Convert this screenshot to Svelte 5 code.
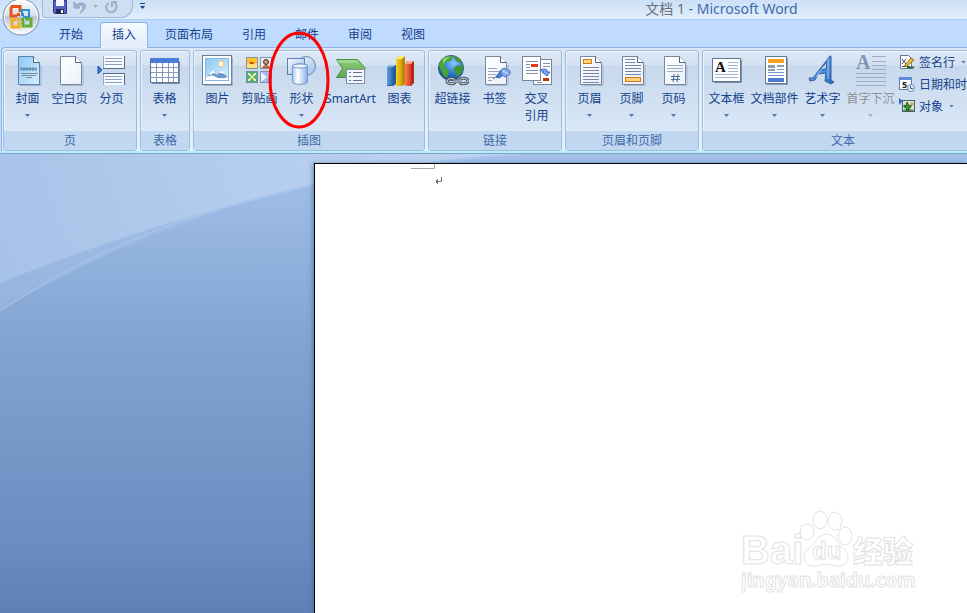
<script lang="ts">
  type Item = { icon: string; label: string; size?: 'wide' | 'long'; menu?: boolean; circled?: boolean; disabled?: boolean }
  type Group = { name: string; items: Item[]; small?: { icon: string; label: string; menu: boolean }[] }

  const tabs = ['开始', '插入', '页面布局', '引用', '邮件', '审阅', '视图']
  let active = $state('插入')

  const groups: Group[] = [
    {
      name: '页',
      items: [
        { icon: 'cover', label: '封面', menu: true },
        { icon: 'blank', label: '空白页' },
        { icon: 'break', label: '分页' }
      ]
    },
    { name: '表格', items: [{ icon: 'table', label: '表格', menu: true }] },
    {
      name: '插图',
      items: [
        { icon: 'picture', label: '图片' },
        { icon: 'clipart', label: '剪贴画' },
        { icon: 'shapes', label: '形状', menu: true, circled: true },
        { icon: 'smartart', label: 'SmartArt', size: 'wide' },
        { icon: 'chart', label: '图表' }
      ]
    },
    {
      name: '链接',
      items: [
        { icon: 'link', label: '超链接' },
        { icon: 'bookmark', label: '书签' },
        { icon: 'crossref', label: '交叉\n引用' }
      ]
    },
    {
      name: '页眉和页脚',
      items: [
        { icon: 'header', label: '页眉', menu: true },
        { icon: 'footer', label: '页脚', menu: true },
        { icon: 'number', label: '页码', menu: true }
      ]
    },
    {
      name: '文本',
      items: [
        { icon: 'textbox', label: '文本框', menu: true },
        { icon: 'parts', label: '文档部件', size: 'long', menu: true },
        { icon: 'wordart', label: '艺术字', menu: true },
        { icon: 'dropcap', label: '首字下沉', size: 'long', menu: true, disabled: true }
      ],
      small: [
        { icon: 'sign', label: '签名行', menu: true },
        { icon: 'date', label: '日期和时间', menu: false },
        { icon: 'object', label: '对象', menu: true }
      ]
    }
  ]
</script>

{#snippet sheet()}
  <path d="M8 30.500h21V10" fill="none" stroke="#8795ab" stroke-opacity=".5" />
  <path d="M6.500 1.500h15l6 6v22h-21z" fill="url(#paper)" stroke="#7787a0" />
  <path d="M21.500 1.500v6h6" fill="#fff" stroke="#53647f" />
{/snippet}

{#snippet icon(name: string)}
  <svg class="icon" viewBox="0 0 32 32" aria-hidden="true">
    {#if name === 'cover'}
      <path d="M8 30.500h21V10" fill="none" stroke="#8795ab" stroke-opacity=".6" />
      <path d="M6.500 1.500h15l6 6v22h-21z" fill="url(#sky)" stroke="#5b82b3" />
      <path d="M21.500 1.500v6h6" fill="#fff" stroke="#53647f" />
      <path d="M9 15.500v-3l3 3v-3l3 3v-3l3 3v-3l3 3v-3l3 3v-3" fill="none" stroke="#456589" />
      <path d="M9 18.500h17M10 20.500h14M14 22.500h6" stroke="#7f8b99" />
    {:else if name === 'blank'}
      {@render sheet()}
    {:else if name === 'break'}
      <path d="M7.500 1v12.500h21V1M7.500 30V18.500h21V30" fill="#f7faff" stroke="#9aa9c2" />
      <path d="M9 3.500h17M9 6.500h17M9 9.500h17M9 21.500h17M9 24.500h17M9 27.500h17" stroke="#8d9fc0" />
      <path d="M28.500 1v12.500H7M7 18.500h21.500V30" fill="none" stroke="#54698e" />
      <path d="M2 11l4 4-4 4z" fill="#3e77d3" stroke="#2355a8" />
    {:else if name === 'table'}
      <path d="M3 28.500h27.500V6" fill="none" stroke="#7d8ca6" />
      <rect x="1.500" y="3.500" width="28" height="24" fill="#fbfdff" stroke="#5f7597" />
      <rect x="2" y="3" width="28" height="5" fill="#4a7cdb" />
      <path d="M2 12.500h28M2 17.500h28M2 22.500h28M7.500 8v19M13.500 8v19M19.500 8v19M24.500 8v19" stroke="#8999b4" />
    {:else if name === 'picture'}
      <rect x="2" y="2" width="29" height="29" fill="#8395ad" opacity=".6" />
      <rect x=".5" y=".5" width="29" height="29" fill="#fff" stroke="#68809d" />
      <rect x="3.500" y="3.500" width="23" height="22" fill="url(#sky)" stroke="#8db6dc" />
      <circle cx="19" cy="9" r="3" fill="#fffbe5" stroke="#f2b984" />
      <path d="M4 23l7-8 4 5 5-5 6 8z" fill="#6e9ac9" />
      <path d="M7 19l4-4 3 4-3-1-2 2zM17 18l3-3 4 5-4-2z" fill="#fff" />
      <path d="M4 22q6-3 10 0t12 0v3H4z" fill="#fff" />
    {:else if name === 'clipart'}
      <rect x="2.500" y="2.500" width="11" height="11" fill="#ffc323" stroke="#8094a6" />
      <path d="M3 9c3-3 6 1 10-1v5H3z" fill="#ffe07a" /><path d="M5 7h3l3 1-2 1H6z" fill="#c64a0c" />
      <rect x="16.500" y="2.500" width="11" height="11" fill="#f2f4f3" stroke="#8094a6" />
      <circle cx="22" cy="7" r="2.500" fill="#c99a78" stroke="#333" /><path d="M18 13c1-4 7-4 8 0z" fill="#c75d38" />
      <rect x="2.500" y="16.500" width="11" height="11" fill="#4cad80" stroke="#7192a0" />
      <path d="M8 22l-4-3 1-1zl3-4 1 1zl4 3-1 1zl-3 4-1-1z" fill="#fff69b" stroke="#fff69b" />
      <rect x="16.500" y="16.500" width="11" height="11" fill="#a6b8fa" stroke="#8094a6" /><path d="M17 17l6 5-6 5z" fill="#eef1ff" />
    {:else if name === 'shapes'}
      <circle cx="20" cy="11" r="9.500" fill="url(#lens)" stroke="#6688b5" />
      <rect x="1.500" y="3.500" width="17" height="16" fill="url(#lens)" stroke="#5f80ad" />
      <path d="M6.500 11c0-3 15-3 15 0v16c0 3-15 3-15 0z" fill="url(#tube)" stroke="#7599ca" />
      <ellipse cx="14" cy="11" rx="7.500" ry="2" fill="#edf6ff" stroke="#7599ca" />
    {:else if name === 'smartart'}
      <path d="M1.500 4.500h21l8 9-8 9h-21l6-9z" fill="url(#leaf)" stroke="#4c8b42" />
      <path d="M2 5h20l2 3H4z" fill="#a7dda0" opacity=".7" />
      <rect x="11.500" y="14.500" width="18" height="14" fill="#f4f8fd" stroke="#8191a9" />
      <path d="M14 17.500h2M18 17.500h9M14 21.500h2M18 21.500h9M14 25.500h2M18 25.500h9" stroke="#5d718f" />
    {:else if name === 'chart'}
      <path d="M3 12l3-2h6v19l-3 2H3z" fill="#235da0" /><path d="M3 12h6v18H3z" fill="url(#blueBar)" /><path d="M3 12l3-2h6l-3 2z" fill="#81b9e9" />
      <path d="M12 4l4-3h5v28l-3 2h-6z" fill="#bb8a00" /><path d="M12 4h6v27h-6z" fill="url(#goldBar)" /><path d="M12 4l4-3h5l-3 3z" fill="#ffeb6b" />
      <path d="M21 9l3-3h6v22l-3 3h-6z" fill="#b62b0f" /><path d="M21 9h6v22h-6z" fill="url(#redBar)" /><path d="M21 9l3-3h6l-3 3z" fill="#ffa486" />
    {:else if name === 'link'}
      <circle cx="14" cy="13" r="12.500" fill="url(#globe)" stroke="#31598f" />
      <path d="M4 5c4-4 8-5 12-3l-2 4-5 1-2 5 5 3-2 8-4-3-4-9z" fill="#4ba536" />
      <path d="M17 1c5 1 7 4 8 7l-4-1-3-2zM19 11l7-1c1 6-2 9-6 12l-2-4-2-4z" fill="#429637" />
      <path d="M6 4c3-2 5-2 7-2l-4 3-3 4z" fill="#b5e492" opacity=".7" />
      <g fill="none">
        <path d="M18 25c-1-2-8-2-8 1s7 4 8 1M23 25c1-3 8-2 8 1s-7 4-8 1M17 26h8" stroke="#4c5560" stroke-width="3" />
        <path d="M18 25c-1-2-8-2-8 1s7 4 8 1M23 25c1-3 8-2 8 1s-7 4-8 1M17 26h8" stroke="#e3e8ec" />
      </g>
    {:else if name === 'bookmark'}
      {@render sheet()}
      <path d="M9 13.500h9M9 16.500h12M9 19.500h8M9 22.500h6M9 25.500h4" stroke="#93a3bc" />
      <path d="M14 24l5-4M17 22l5-7 4 4-6 4z" fill="#5283d3" stroke="#3a65ae" />
      <path d="M22 15l3-2 6 3v3l-5 3-4-3z" fill="#87acef" stroke="#4774c0" />
      <path d="M24 16l5 3" stroke="#dae8ff" />
    {:else if name === 'crossref'}
      <rect x="12.500" y="4.500" width="18" height="25" fill="#fff" stroke="#75869d" />
      <path d="M22 8.500h7M22 11.500h7M16 27.500h5" stroke="#7d90af" />
      <path d="M22 23h6v3h-6z" fill="#c5320e" />
      <rect x="1.500" y="1.500" width="18" height="24" fill="#fff" stroke="#75869d" />
      <path d="M5 6.500h12M5 9.500h4M5 12.500h4M5 15.500h12M5 18.500h12" stroke="#7d90af" />
      <path d="M10 9h7v3h-7z" fill="#de3d16" />
      <path d="M19 15c5-2 8-1 7 2h3l-3 4-5-4h2c0-1-2-1-4-1z" fill="#7da6f4" stroke="#416fc2" />
    {:else if name === 'header'}
      {@render sheet()}
      <rect x="9.500" y="4.500" width="8" height="4" fill="#ffd785" stroke="#d47a11" />
      <path d="M9 12.500h16M9 15.500h16M9 18.500h16M9 21.500h16M9 24.500h16M9 27.500h16" stroke="#7587a5" />
    {:else if name === 'footer'}
      {@render sheet()}
      <path d="M9 4.500h10M9 7.500h10M9 10.500h16M9 13.500h16M9 16.500h16M9 19.500h16" stroke="#7587a5" />
      <rect x="9.500" y="22.500" width="15" height="4" fill="#ffd07b" stroke="#d47a11" />
    {:else if name === 'number'}
      {@render sheet()}
      <path d="M9 10.500h16M9 13.500h16M9 16.500h16" stroke="#a0adc1" />
      <path d="M16 19l-1 8M20 19l-1 8M13 21.500h9M13 24.500h9" fill="none" stroke="#526c98" />
    {:else if name === 'textbox'}
      <path d="M3 27.500h27.500V5" fill="none" stroke="#7d8ca6" />
      <rect x="1.500" y="3.500" width="28" height="23" fill="#fcfdff" stroke="#647791" />
      <text x="4" y="17" font-size="15" font-weight="bold" fill="#111" class="serif">A</text>
      <path d="M17 7.500h10M17 10.500h10M17 13.500h10M17 16.500h10M4 19.500h23M4 22.500h23" stroke="#a7b4cb" />
    {:else if name === 'parts'}
      <path d="M7 29.500h21.500V3" fill="none" stroke="#8b9aad" />
      <rect x="6.500" y="1.500" width="21" height="27" fill="#fff" stroke="#647a98" />
      <path d="M9 4h16v4H9z" fill="#ff9e24" />
      <path d="M9 10h7v3H9zM18 10h7v2h-7zM9 14h7v2H9z" fill="#8e9cb0" />
      <path d="M18 14.500h7M9 17.500h16M9 20.500h16" stroke="#7898cf" />
      <path d="M9 23h16v4H9z" fill="#4c7ccc" />
    {:else if name === 'wordart'}
      <path d="M6 23L23 1h1v24l3 2-3 2-6-3 1-8-8 1-3 6-5 1-1-3zM13 15l6-1 1-7z" fill="url(#word)" stroke="#315d9d" fill-rule="evenodd" />
      <path d="M21 4v20M9 22l8-11" stroke="#a8d0ff" stroke-opacity=".8" />
    {:else if name === 'dropcap'}
      <text x="1" y="14" font-size="20" font-weight="bold" fill="#8195b2" class="serif">A</text>
      <path d="M17 1.500h14M17 6.500h14M17 10.500h14M17 14.500h14M1 18.500h30M1 22.500h30M1 26.500h30M1 30.500h30" stroke="#9eadc1" />
    {/if}
  </svg>
{/snippet}

{#snippet smallIcon(name: string)}
  <svg class="small-icon" viewBox="0 0 16 16" aria-hidden="true">
    {#if name === 'sign'}
      <path d="M1.500 1.500h8l3 3v10h-11z" fill="#fff" stroke="#657c9e" />
      <path d="M3 5l4 5M3 10l4-5M3 12.500h8" stroke="#39485b" />
      <path d="M6 11l6-7 3 2-7 6-3 1z" fill="#f0c23f" stroke="#976718" />
      <path d="M8 13.500h7" stroke="#25672f" stroke-width="2" />
    {:else if name === 'date'}
      <rect x=".5" y="1.500" width="12" height="12" fill="#fff" stroke="#6178a0" />
      <path d="M1 1h12v3H1z" fill="#5e8bdd" />
      <text x="3" y="12" font-size="9" font-weight="bold" fill="#222">5</text>
      <circle cx="12" cy="12" r="3.500" fill="#e6f2ff" stroke="#6685b0" />
      <path d="M11.500 10v2.500H14" fill="none" stroke="#3e5375" />
    {:else}
      <rect x="3.500" y="2.500" width="12" height="11" fill="#d9e7d9" stroke="#47616a" />
      <path d="M0 0l4 3-4 4z" fill="#376bd1" />
      <path d="M4 12c3-2 7-2 11 0v1H4z" fill="#789a62" />
      <path d="M7.500 13V10L5 9V7l2 1 1-4 2 4 2-1v2l-2 1v3z" fill="#3b962c" stroke="#24601c" />
      <circle cx="13" cy="6" r="1.500" fill="#da9b16" />
    {/if}
  </svg>
{/snippet}

<div class="window">
  <svg class="defs" aria-hidden="true">
    <defs>
      <linearGradient id="paper" x2="1" y2="1"><stop stop-color="#fff" /><stop offset="1" stop-color="#e9eff9" /></linearGradient>
      <linearGradient id="sky" x2="1" y2="1"><stop stop-color="#8bc9f4" /><stop offset="1" stop-color="#d5f0ff" /></linearGradient>
      <linearGradient id="lens" x2="1" y2="1"><stop stop-color="#f2f8ff" /><stop offset="1" stop-color="#9dbde8" /></linearGradient>
      <linearGradient id="tube"><stop stop-color="#a8c9f3" /><stop offset=".35" stop-color="#fff" /><stop offset="1" stop-color="#84aee9" /></linearGradient>
      <linearGradient id="leaf" x2="0" y2="1"><stop stop-color="#8bcf79" /><stop offset="1" stop-color="#5fa84f" /></linearGradient>
      <linearGradient id="blueBar"><stop stop-color="#5d9ddd" /><stop offset="1" stop-color="#2c68ad" /></linearGradient>
      <linearGradient id="goldBar"><stop stop-color="#f9ce29" /><stop offset="1" stop-color="#d29f08" /></linearGradient>
      <linearGradient id="redBar"><stop stop-color="#f77b55" /><stop offset="1" stop-color="#d63c1e" /></linearGradient>
      <radialGradient id="globe" cx=".6" cy=".3" r=".8"><stop stop-color="#8cc9ff" /><stop offset=".5" stop-color="#2f7ad5" /><stop offset="1" stop-color="#103d8c" /></radialGradient>
      <linearGradient id="word" x2="1" y2="1"><stop stop-color="#7eb9ff" /><stop offset="1" stop-color="#286ac0" /></linearGradient>
      <linearGradient id="orb" x2="0" y2="1"><stop stop-color="#fff" /><stop offset=".45" stop-color="#d9dfe9" /><stop offset=".5" stop-color="#b9c3d2" /><stop offset="1" stop-color="#fff" /></linearGradient>
      <linearGradient id="haze" x2="1" y2="0"><stop stop-color="#a9c4e8" /><stop offset=".5" stop-color="#b8cfef" /><stop offset="1" stop-color="#c2d6f2" /></linearGradient>
    </defs>
  </svg>

  <header class="titlebar">
    <button class="office" aria-label="Office">
      <svg viewBox="0 0 38 38" aria-hidden="true">
        <circle cx="19" cy="17" r="18" fill="url(#orb)" stroke="#7e90ac" />
        <circle cx="19" cy="17" r="16.500" fill="none" stroke="#fff" stroke-opacity=".8" />
        <g fill="none" stroke-width="3">
          <path d="M18 12V6.500h-8l-1 2V16h6" stroke="#e6541b" />
          <path d="M20 14v-4h7v7h-6" stroke="#2d91d8" stroke-width="2" />
          <path d="M14 19.500H10V27h7v-5" stroke="#f4ae16" />
          <path d="M21 21v5h8v-7h-6" stroke="#66ad31" />
        </g>
        <path d="M15 13h3v3h-3z" fill="#e6541b" /><path d="M19 13h3v3h-3z" fill="#2d91d8" />
        <path d="M15 18h3v3h-3z" fill="#f4ae16" /><path d="M19 18h3v3h-3z" fill="#66ad31" />
      </svg>
    </button>
    <div class="quick">
      <button aria-label="保存">
        <svg width="14" height="14" viewBox="0 0 14 14"><path d="M.5.5h13v13h-12l-1-1z" fill="#5263c7" stroke="#313985" /><path d="M3 0h8v6H3z" fill="#f4f7ff" /><path d="M3 9h8v5H3z" fill="#262b54" /><path d="M8 10h2v3H8z" fill="#fff" /></svg>
      </button>
      <button aria-label="撤消" disabled>
        <svg width="14" height="14" viewBox="0 0 14 14"><path d="M1 2v6h6L5 6c5-3 7 2 2 7 8-4 7-13-2-9L3 5z" fill="#a5b6d1" stroke="#8da2c3" /></svg>
      </button>
      <i class="arrow off"></i>
      <button aria-label="恢复" disabled>
        <svg width="14" height="14" viewBox="0 0 14 14"><path d="M5 3c-5 3-3 9 2 9s7-5 4-9M8 7V2h5" fill="none" stroke="#9fb0cb" stroke-width="2" /></svg>
      </button>
    </div>
    <button class="customize" aria-label="自定义快速访问工具栏"><i class="arrow"></i></button>
    <h1><span>文档 1</span> - Microsoft Word</h1>
  </header>

  <nav class="tabs">
    {#each tabs as tab}
      <button class="tab" class:active={tab === active} onclick={() => (active = tab)}>{tab}</button>
    {/each}
  </nav>

  <section class="ribbon">
    {#each groups as group}
      <div class="group">
        <div class="items">
          {#each group.items as item}
            <button class="item {item.size ?? ''}" disabled={item.disabled}>
              {@render icon(item.icon)}
              <span class="label">{item.label}</span>
              {#if item.menu}<i class="arrow" class:off={item.disabled}></i>{/if}
              {#if item.circled}
                <svg class="circle" viewBox="0 0 62 98" aria-hidden="true">
                  <ellipse cx="31" cy="49" rx="29" ry="47" />
                </svg>
              {/if}
            </button>
          {/each}
          {#if group.small}
            <div class="small-items">
              {#each group.small as item}
                <button class="small-item">
                  {@render smallIcon(item.icon)}
                  <span>{item.label}</span>
                  {#if item.menu}<i class="arrow"></i>{/if}
                </button>
              {/each}
            </div>
          {/if}
        </div>
        <div class="group-name">{group.name}</div>
      </div>
    {/each}
  </section>

  <main class="workspace">
    <svg class="swoosh" viewBox="0 0 560 200" aria-hidden="true">
      <path d="M0 0H560Q430 2 314 31Q150 68 0 157z" fill="#adc9ec" opacity=".35" />
      <path d="M0 0H510Q400 8 314 30Q150 68 0 129z" fill="url(#haze)" opacity=".85" />
      <path d="M0 157Q100 90 220 55Q380 10 520 0" fill="none" stroke="#b4cdf0" stroke-opacity=".6" />
    </svg>
    <article class="page">
      <svg class="margin-mark" viewBox="0 0 36 24" aria-hidden="true">
        <path d="M0 4.500h23.500V0" fill="none" stroke="#a5a5a5" />
        <path d="M30.500 13v4.500H25M26.500 15v5M25.500 16v3" fill="none" stroke="#777" />
      </svg>
      <svg class="watermark" viewBox="0 0 180 86" role="img" aria-label="Baidu 经验 jingyan.baidu.com">
        <g fill="#fff" stroke="#e2e2e2">
          <text x="0" y="55" font-size="40" font-weight="bold" class="logo">Bai</text>
          <ellipse cx="66" cy="23" rx="7" ry="8" />
          <ellipse cx="79" cy="11" rx="7" ry="9" />
          <ellipse cx="94" cy="12" rx="7" ry="9" />
          <ellipse cx="104" cy="27" rx="7" ry="9" />
          <path d="M75 32c5-9 16-9 21 0 4 6 11 9 11 16s-6 10-12 9c-7-2-12-2-19 0-7 1-13-2-13-9s8-10 12-16z" />
          <text x="71" y="50" font-size="24" font-weight="bold" class="logo">du</text>
          <text x="112" y="53" font-size="30" font-weight="900">经验</text>
          <text x="0" y="78" font-size="19" font-weight="bold">jingyan.baidu.com</text>
        </g>
      </svg>
    </article>
  </main>
</div>

<style>
  :global(body) {
    margin: 0;
  }

  .window {
    display: flex;
    flex-direction: column;
    min-height: 100vh;
    overflow: hidden;
    background: #bfdbff;
    color: #15428b;
    font: 12px/17px "Noto Sans", "Noto Sans CJK SC", sans-serif;
  }

  .defs {
    position: absolute;
    width: 0;
    height: 0;
  }

  button {
    padding: 0;
    border: 0;
    background: none;
    color: inherit;
    font: inherit;
  }

  svg {
    display: block;
    flex-shrink: 0;
  }

  .serif {
    font-family: "Liberation Serif", serif;
  }

  .logo {
    font-family: "Liberation Sans", sans-serif;
  }

  .arrow {
    width: 5px;
    height: 3px;
    background: #4b76b4;
    clip-path: polygon(0 0, 100% 0, 50% 100%);
  }

  .arrow.off { background: #a9afb9; }

  .titlebar {
    position: relative;
    display: flex;
    height: 19px;
    padding-left: 42px;
    border-bottom: 1px solid #a8d0f2;
    background: linear-gradient(#cbdff7, #e3effc);
  }

  .office {
    position: absolute;
    left: 2px;
    top: 0;
    z-index: 2;
    width: 38px;
    height: 38px;
  }

  .quick {
    display: flex;
    align-items: center;
    gap: 6px;
    box-sizing: border-box;
    width: 91px;
    height: 18px;
    padding: 0 0 4px 10px;
    border: 1px solid #9fb8d9;
    border-top: 0;
    border-radius: 0 0 12px 4px;
    background: #cfdef2;
  }

  .customize {
    display: flex;
    flex-direction: column;
    gap: 2px;
    align-self: flex-start;
    padding: 3px 7px;
  }

  .customize::before {
    content: '';
    width: 5px;
    height: 1px;
    background: #15428b;
  }

  .customize .arrow { background: #15428b; }

  h1 {
    flex: 1;
    margin: 0;
    padding-left: 324px;
    color: #3e6aaa;
    font-size: 14px;
    font-weight: 400;
    line-height: 17px;
    text-align: center;
    white-space: nowrap;
  }

  h1 span { color: #69707b; }

  .tabs {
    display: flex;
    gap: 5px;
    height: 27px;
    padding: 2px 0 0 47px;
    box-sizing: border-box;
    background: #bfdbff;
  }

  .tab {
    height: 26px;
    padding: 0 11px 2px;
    border: 1px solid transparent;
    border-bottom: 0;
    border-radius: 4px 4px 0 0;
  }

  .tab.active {
    position: relative;
    border-color: #8db2e3;
    background: linear-gradient(#f5faff, #e2edf9);
    box-shadow: inset 0 0 2px #fff;
  }

  .ribbon {
    display: flex;
    gap: 3px;
    margin-left: 1px;
    padding: 2px 0 0 1px;
    border: 1px solid #8db2e3;
    border-right: 0;
    border-bottom: 2px solid #b7eefa;
    border-radius: 4px 0 0 4px;
    background: linear-gradient(#dbe7f5, #e3f1fb);
  }

  .group {
    flex: none;
    box-sizing: border-box;
    height: 101px;
    border: 1px solid #9ebedb;
    border-radius: 3px;
    background: linear-gradient(#dee8f5 0, #d4e1f1 14px, #c7d8ed 15px, #d9e8f6 80px);
    box-shadow: inset 1px 1px #eaf2fb;
  }

  .items {
    display: flex;
    height: 80px;
    padding: 0 4px 0 2px;
  }

  .item {
    position: relative;
    display: flex;
    flex: none;
    flex-direction: column;
    align-items: center;
    width: 42px;
    padding: 4px 0 0 1px;
    box-sizing: border-box;
  }

  .item.wide { width: 56px; }
  .item.long { width: 54px; }
  .item:disabled { color: #8d9096; }

  .icon {
    width: 32px;
    height: 32px;
  }

  .label {
    padding-top: 3px;
    white-space: pre;
  }

  .item .arrow { margin-top: 7px; }

  .circle {
    position: absolute;
    left: -12px;
    top: -20px;
    z-index: 3;
    width: 62px;
    height: 98px;
    fill: none;
    stroke: #f00;
    stroke-width: 3px;
    pointer-events: none;
  }

  .small-items {
    display: flex;
    flex-direction: column;
    padding-left: 2px;
  }

  .small-item {
    display: flex;
    align-items: center;
    gap: 4px;
    height: 22px;
    white-space: nowrap;
  }

  .small-item .arrow { margin-left: 2px; }

  .small-icon {
    width: 16px;
    height: 16px;
  }

  .group-name {
    height: 19px;
    background: #c1d8f0;
    color: #3e6aaa;
    line-height: 19px;
    text-align: center;
  }

  .workspace {
    position: relative;
    display: flex;
    flex: 1;
    padding: 10px 0 0 314px;
    background: linear-gradient(#a3c1ea 0, #9bbae5 50px, #84a5d3 180px, #688cbf 400px, #5d81b5 100%);
    box-shadow: inset 0 1px #7fa3cc;
  }

  .swoosh {
    position: absolute;
    left: 0;
    top: 1px;
    width: 560px;
    height: 200px;
  }

  .page {
    position: relative;
    flex: 1;
    border: solid #000;
    border-width: 1px 0 0 1px;
    background: #fff;
    box-shadow: -2px 0 4px #40659488;
  }

  .margin-mark {
    width: 36px;
    height: 24px;
    margin-left: 96px;
  }

  .watermark {
    position: absolute;
    right: 46px;
    bottom: 18px;
    width: 180px;
    height: 86px;
    font-family: "Noto Sans", "Noto Sans CJK SC", sans-serif;
  }
</style>
